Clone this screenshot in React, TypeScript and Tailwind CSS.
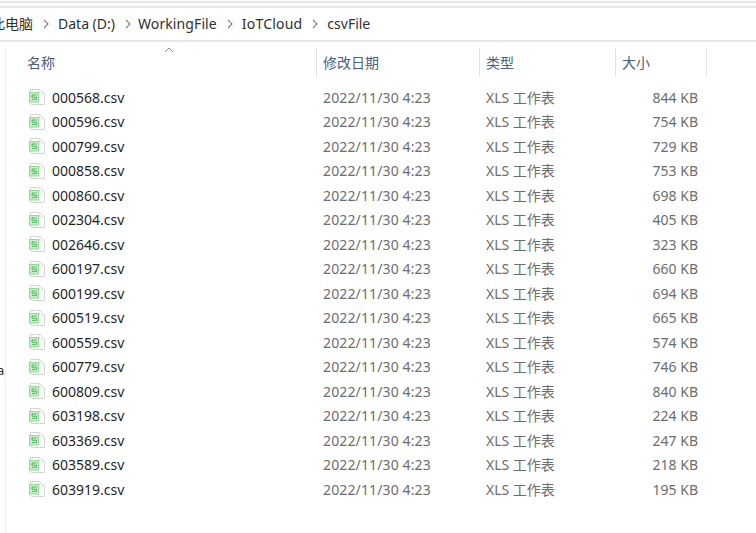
const rows: [string, string][] = [
  ["000568", "844"],["000596", "754"],["000799", "729"],["000858", "753"],["000860", "698"],
  ["002304", "405"],["002646", "323"],["600197", "660"],["600199", "694"],["600519", "665"],
  ["600559", "574"],["600779", "746"],["600809", "840"],["603198", "224"],["603369", "247"],
  ["603589", "218"],["603919", "195"],
];

function Chevron({ gap }: { gap: string }) {
  return (
    <svg width="6" height="10" viewBox="0 0 6 10" className={`shrink-0 ml-[10px] ${gap}`} fill="none" stroke="#808080" strokeWidth="1.1">
      <path d="M1 1l4 4-4 4" />
    </svg>
  );
}

function FileIcon() {
  return (
    <svg width="18" height="18" viewBox="0 0 18 18" className="shrink-0" fill="none">
      <path d="M3.5 1.5H12.5L17.5 6V16.5H5.5Q3.5 16.5 3.5 15Z" fill="#fff" stroke="#d4d4d4" />
      <path d="M12.5 1.5V6H17.5" stroke="#e2e2e2" />
      <rect x="2.5" y="4.5" width="9" height="9.5" fill="#c6eec8" stroke="#8edb93" />
      <path d="M5 7h4.5M5 9.2h4.5M5 11.4h4.5M5 7v2.2M9.5 9.2v2.2" stroke="#46b152" strokeWidth="0.9" />
    </svg>
  );
}

function Head({ label, className }: { label: string; className: string }) {
  return (
    <div className={`${className} h-[29px] flex items-center border-r border-[#e5e5e5] pl-[6px] text-[#4c607a]`}>
      {label}
    </div>
  );
}

export default function App() {
  return (
    <div className="w-[756px] h-[533px] overflow-hidden bg-white flex flex-col text-[14px] font-['Noto_Sans','Noto_Sans_CJK_SC',sans-serif]">
      <div className="h-[2px] mt-[1px] bg-[#e6e6e6]" />
      <div className="h-[2px] mt-[3px] bg-[#e6e6e6]" />
      <div className="h-[34px] shrink-0 flex items-center pb-[1px] border-b-2 border-[#e8e8e8] text-[#303030] whitespace-nowrap -ml-[9px]">
        <span>此电脑</span>
        <Chevron gap="mr-[9px]" />
        <span>Data (D:)</span>
        <Chevron gap="mr-[7px]" />
        <span className="tracking-[0.1px]">WorkingFile</span>
        <Chevron gap="mr-[9px]" />
        <span className="tracking-[0.2px]">IoTCloud</span>
        <Chevron gap="mr-[9px]" />
        <span>csvFile</span>
      </div>
      <div className="flex flex-1 min-h-0">
        <div className="w-[6px] shrink-0 border-r border-[#f0f0f0] mt-[6px] relative">
          <span className="absolute left-[-3px] top-[316px] text-[#303030] text-[13px] leading-none">a</span>
        </div>
        <div className="flex-1 flex flex-col">
          <div className="flex mt-[6px] relative">
            <svg width="10" height="6" viewBox="0 0 10 6" className="absolute left-[158px] top-[-1px]" fill="none" stroke="#8a8a8a">
              <path d="M1 5l4-4 4 4" />
            </svg>
            <div className="w-[311px] h-[29px] flex items-center border-r border-[#e5e5e5] pl-[21px] text-[#4c607a]">名称</div>
            <Head label="修改日期" className="w-[163px]" />
            <Head label="类型" className="w-[136px]" />
            <Head label="大小" className="w-[91px]" />
          </div>
          <div className="flex flex-col mt-[8px]">
            {rows.map(([n, s]) => (
              <div key={n} className="h-[24.5px] flex items-center">
                <div className="w-[311px] flex items-center pl-[21px] text-[#1f1f1f]">
                  <FileIcon />
                  <span className="ml-[7px]">{n}.csv</span>
                </div>
                <div className="w-[163px] pl-[6px] text-[#6d6d6d] tracking-[0.13px]">2022/11/30 4:23</div>
                <div className="w-[136px] pl-[6px] text-[#6d6d6d]">XLS 工作表</div>
                <div className="w-[82px] text-right text-[#6d6d6d]">{s} KB</div>
              </div>
            ))}
          </div>
        </div>
      </div>
    </div>
  );
}
